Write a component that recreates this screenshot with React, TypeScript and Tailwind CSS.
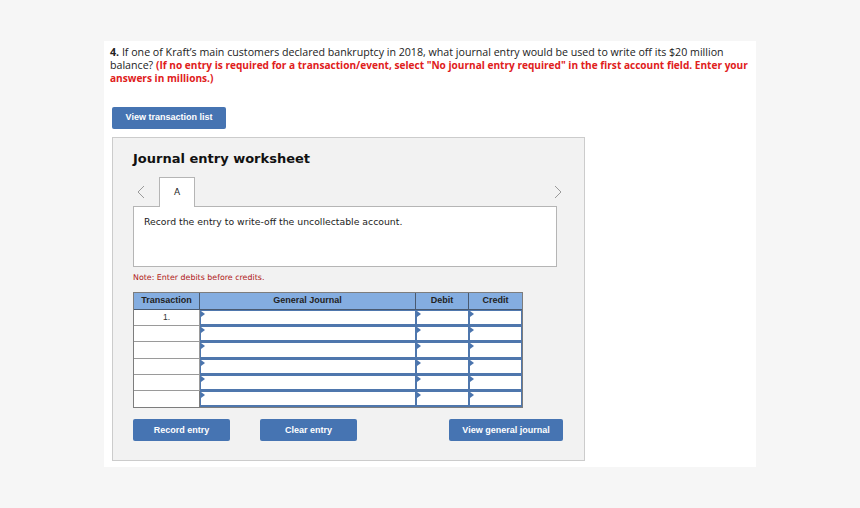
import React from "react";

const Marker = () => (
  <span className="absolute left-0 top-0 w-0 h-0 border-t-[3px] border-b-[3px] border-l-[4px] border-t-transparent border-b-transparent border-l-[#4a74ad]" />
);

const InputCell = ({ w }: { w: string }) => (
  <div className={`relative ${w} h-full bg-white border border-b-2 border-[#4f77ad]`}>
    <Marker />
  </div>
);

const verdana = { fontFamily: "'DejaVu Sans', Verdana, sans-serif" };
const arial = { fontFamily: "'Liberation Sans', Arial, sans-serif" };

export default function App() {
  const rows = [0, 1, 2, 3, 4, 5];
  return (
    <div className="w-[860px] h-[508px] bg-[#f6f6f6] pt-[41px] pl-[104px]" style={{ fontFamily: "'Open Sans', Lato, sans-serif" }}>
      <div className="w-[652px] h-[426px] bg-white pt-[5px] flex flex-col">
        <p className="pl-[6px] text-[10.65px] leading-[13px] text-[#222] whitespace-nowrap">
          <b>4.</b> If one of Kraft’s main customers declared bankruptcy in 2018, what journal entry would be used to write off its $20 million
          <br />
          balance? <span className="font-bold text-[10.1px] text-[#e0201b]">(If no entry is required for a transaction/event, select "No journal entry required" in the first account field. Enter your</span>
          <br />
          <span className="font-bold text-[10.1px] text-[#e0201b]">answers in millions.)</span>
        </p>
        <div className="pl-[8px] mt-[17px]">
          <button className="w-[114px] h-[22px] bg-[#4674b2] rounded-[2px] text-white text-[9px] font-bold" style={arial}>
            View transaction list
          </button>
        </div>
        <div className="ml-[8px] mt-[8px] w-[473px] h-[324px] bg-[#f2f2f2] border border-[#cccccc] pl-[20px] pt-[13px]">
          <h2 className="text-[13px] leading-[16px] font-bold text-[#111]" style={verdana}>
            Journal entry worksheet
          </h2>
          <div className="mt-[10px] w-[429px] h-[30px] flex items-start relative z-10">
            <div className="w-[26px] h-[30px] flex items-center pl-[4px]">
              <svg width="8" height="14" viewBox="0 0 8 14"><polyline points="7,1 1,7 7,13" fill="none" stroke="#9a9a9a" strokeWidth="1" /></svg>
            </div>
            <div className="w-[36px] h-[30px] bg-white border border-b-0 border-[#b5b5b5] flex items-center justify-center text-[9px] text-[#222]" style={verdana}>
              A
            </div>
            <div className="flex-1" />
            <div className="h-[30px] flex items-center">
              <svg width="8" height="14" viewBox="0 0 8 14"><polyline points="1,1 7,7 1,13" fill="none" stroke="#9a9a9a" strokeWidth="1" /></svg>
            </div>
          </div>
          <div className="-mt-[1px] w-[424px] h-[61px] bg-white border border-[#b5b5b5] pl-[10px] pt-[8px] text-[9.3px] text-[#222]" style={verdana}>
            Record the entry to write-off the uncollectable account.
          </div>
          <p className="mt-[5px] text-[7.9px] text-[#b02020]" style={verdana}>
            Note: Enter debits before credits.
          </p>
          <div className="mt-[8px] w-[390px] border border-[#7d7d7d] bg-white" style={arial}>
            <div className="flex h-[17px] bg-[#84ade0] border-b border-[#4a5a70] text-[9px] font-bold text-[#222]">
              <div className="w-[66px] flex items-center justify-center border-r border-[#4a5a70]">Transaction</div>
              <div className="w-[216px] flex items-center justify-center border-r border-[#4a5a70]">General Journal</div>
              <div className="w-[53px] flex items-center justify-center border-r border-[#4a5a70]">Debit</div>
              <div className="flex-1 flex items-center justify-center">Credit</div>
            </div>
            {rows.map((r) => (
              <div key={r} className="flex h-[16.3px]">
                <div className={`w-[66px] h-full border-r border-[#7d7d7d] ${r < 5 ? "border-b border-[#9a9a9a]" : ""} flex items-center justify-center text-[8.5px] text-[#333]`}>
                  {r === 0 ? "1." : ""}
                </div>
                <InputCell w="w-[216px]" />
                <InputCell w="w-[53px]" />
                <InputCell w="flex-1" />
              </div>
            ))}
          </div>
          <div className="mt-[11px] w-[430px] flex text-white text-[9px] font-bold" style={arial}>
            <button className="w-[97px] h-[22px] bg-[#4674b2] rounded-[2px]">Record entry</button>
            <button className="ml-[30px] w-[97px] h-[22px] bg-[#4674b2] rounded-[2px]">Clear entry</button>
            <div className="flex-1" />
            <button className="w-[114px] h-[22px] bg-[#4674b2] rounded-[2px]">View general journal</button>
          </div>
        </div>
      </div>
    </div>
  );
}
